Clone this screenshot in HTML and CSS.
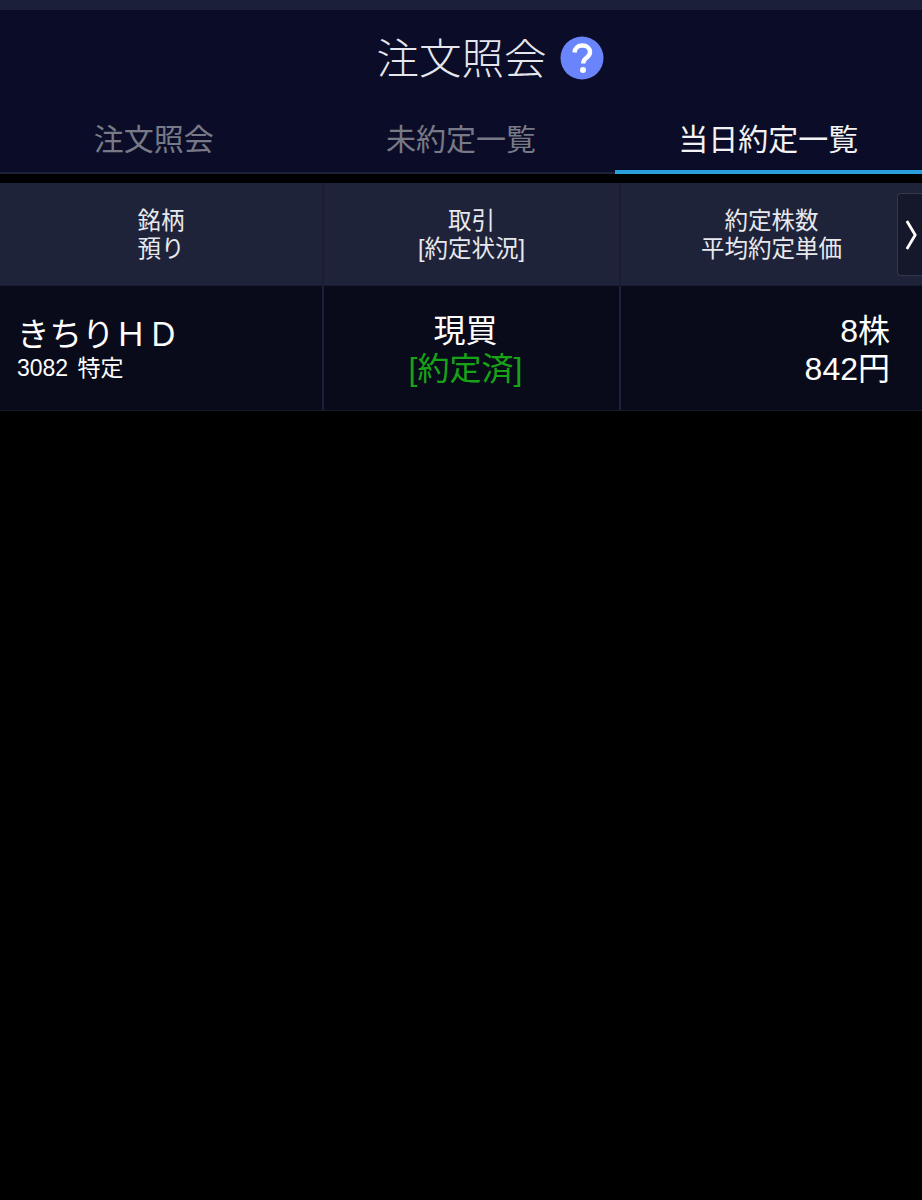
FILE: index.html
```html
<!DOCTYPE html>
<html lang="ja">
<head>
    <meta charset="UTF-8">
    <meta name="viewport" content="width=device-width, initial-scale=1.0">
    <title>注文照会</title>
    <link rel="stylesheet" href="styles.css">
</head>
<body>
    <div class="topbar"></div>
    <div class="head">
        <div class="title">
            <h1>注文照会</h1>
            <svg class="help" viewBox="0 0 44 44" aria-hidden="true">
                <circle cx="22" cy="22" r="21.5" fill="#6a85fb"/>
                <path d="M14.5 16.5c.4-4.400 3.400-7 7.800-7 4.500 0 7.700 2.700 7.700 6.500 0 3-1.600 4.500-3.700 6-2.100 1.500-3.100 2.500-3.100 5.500" fill="none" stroke="#fff" stroke-width="4.400"/>
                <circle cx="23" cy="34" r="3" fill="#fff"/>
            </svg>
        </div>
        <div class="tabs">
            <div class="tab">注文照会</div>
            <div class="tab">未約定一覧</div>
            <div class="tab active">当日約定一覧</div>
        </div>
    </div>
    <div class="table">
        <div class="row header">
            <div class="cell">銘柄<br>預り</div>
            <div class="cell">取引<br>[約定状況]</div>
            <div class="cell">約定株数<br>平均約定単価</div>
        </div>
        <div class="row data">
            <div class="cell name">
                <div class="stock">きちりＨＤ</div>
                <div class="code">3082 特定</div>
            </div>
            <div class="cell trade">
                <div>現買</div>
                <div class="done">[約定済]</div>
            </div>
            <div class="cell amount">
                <div>8株</div>
                <div>842円</div>
            </div>
        </div>
        <div class="more">
            <svg viewBox="0 0 14 32" aria-hidden="true">
                <path d="M2 1 11 16 2 31" fill="none" stroke="#fff" stroke-width="3"/>
            </svg>
        </div>
    </div>
</body>
</html>
```

FILE: styles.css
```css
body {
    margin: 0;
    background-color: #000;
    color: #fff;
    font-family: "Liberation Sans", "Noto Sans CJK JP", sans-serif;
}

.topbar {
    height: 10px;
    background-color: #1b1f38;
}

.head {
    background-color: #0b0d28;
}

.title {
    display: flex;
    justify-content: center;
    align-items: center;
    gap: 13px;
    height: 90px;
    padding-left: 58px;
    padding-bottom: 6px;
}

.title h1 {
    margin: 0;
    font-size: 42.5px;
    font-weight: 300;
    color: #e6e7ec;
}

.help {
    width: 44px;
    height: 44px;
    margin-top: 6px;
}

.tabs {
    display: grid;
    grid-template-columns: repeat(3, 1fr);
    border-bottom: 2px solid #1c1f38;
}

.tab {
    height: 68px;
    line-height: 68px;
    margin-bottom: -2px;
    text-align: center;
    font-size: 30px;
    color: #777986;
}

.tab.active {
    color: #f2f2f4;
    height: 64px;
    border-bottom: 4px solid #2a9ddc;
}

.table {
    position: relative;
    margin-top: 9px;
}

.row {
    display: grid;
    grid-template-columns: 324px 297px 1fr;
}

.cell {
    display: flex;
    flex-direction: column;
    justify-content: center;
    border-right: 2px solid #1c2038;
}

.cell:last-child {
    border-right: none;
}

.header {
    height: 102px;
    background-color: #1f2339;
    border-bottom: 1px solid #191c30;
}

.header .cell {
    display: block;
    padding-top: 24px;
    box-sizing: border-box;
    text-align: center;
    font-size: 23.5px;
    line-height: 28px;
    color: #e8e9ee;
    border-right-color: #1a1d33;
}

.data {
    height: 124px;
    background-color: #090b1a;
    border-bottom: 1px solid #15182b;
}

.name {
    padding-left: 17px;
}

.stock {
    font-size: 32.5px;
    line-height: 38px;
    margin-top: 2px;
}

.code {
    font-size: 23px;
    line-height: 28px;
    word-spacing: 3px;
}

.trade {
    align-items: center;
    box-sizing: border-box;
    font-size: 32px;
    line-height: 38px;
    padding-right: 12px;
    padding-top: 4px;
}

.done {
    color: #16a316;
}

.amount {
    align-items: flex-end;
    box-sizing: border-box;
    font-size: 32px;
    line-height: 38px;
    padding-right: 32px;
    padding-top: 4px;
}

.more {
    position: absolute;
    top: 10px;
    right: 0;
    width: 25px;
    height: 83px;
    display: flex;
    align-items: center;
    justify-content: center;
    padding-left: 2px;
    box-sizing: border-box;
    background-color: #15172a;
    border: 1px solid #34374c;
    border-right: none;
    border-radius: 4px 0 0 4px;
}

.more svg {
    width: 13px;
    height: 30px;
}
```
